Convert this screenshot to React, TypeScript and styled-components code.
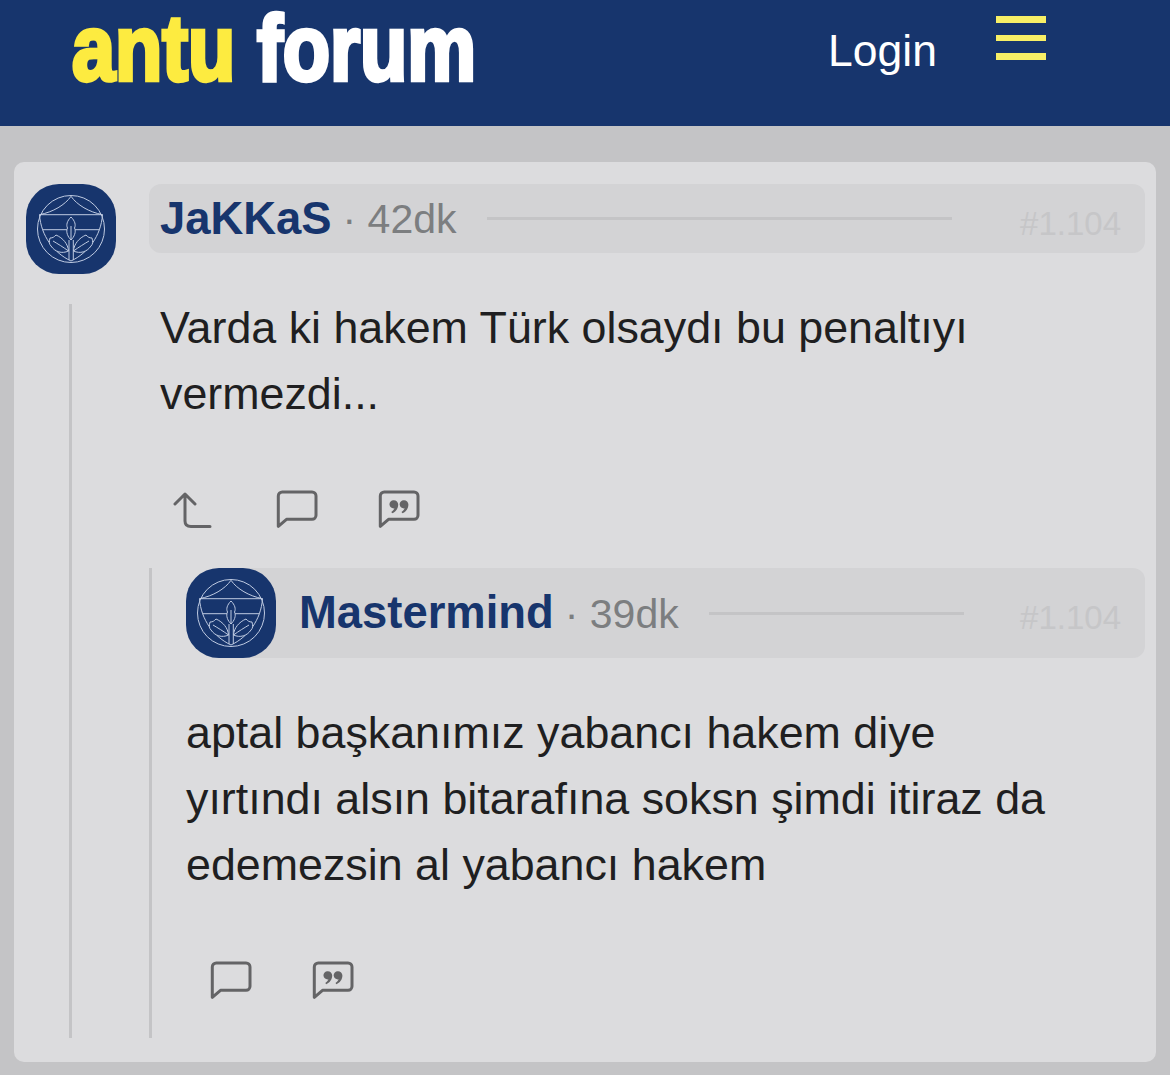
import React from "react";
import styled, { createGlobalStyle } from "styled-components";

const Global = createGlobalStyle`
  html, body { margin: 0; padding: 0; background: #c4c4c6; }
  body { font-family: "Liberation Sans", Arial, sans-serif; }
`;

const Page = styled.div`
  width: 1170px;
  height: 1075px;
  overflow: hidden;
  background: #c4c4c6;
`;

const Header = styled.header`
  height: 126px;
  background: #17356d;
  display: flex;
  align-items: flex-start;
  padding: 0 124px 0 72px;
  box-sizing: border-box;
`;

const Logo = styled.div`
  flex: none;
  height: 100px;
  white-space: nowrap;
  font-family: "Liberation Sans Narrow", "Liberation Sans", sans-serif;
  font-weight: 700;
  font-size: 86px;
  line-height: 100px;
  transform: scale(0.9, 1.08);
  transform-origin: 0 80px;
  -webkit-text-stroke: 4px currentColor;
  color: #fff;
`;

const LogoAccent = styled.span`
  color: #fdeb40;
`;

const Login = styled.a`
  margin-left: auto;
  margin-top: 25px;
  color: #fff;
  font-size: 44.5px;
  line-height: 52px;
`;

const Burger = styled.div`
  flex: none;
  margin-left: 59px;
  margin-top: 16px;
  width: 50px;
  display: flex;
  flex-direction: column;
  gap: 12px;
`;

const BurgerBar = styled.span`
  height: 6.5px;
  background: #f7ef66;
`;

const Card = styled.main`
  margin: 36px 14px 0;
  height: 900px;
  box-sizing: border-box;
  background: #dcdcde;
  border-radius: 10px;
  padding: 22px 11px 24px 12px;
  display: flex;
`;

const AvatarColumn = styled.div`
  width: 123px;
  flex: none;
  display: flex;
  flex-direction: column;
`;

const ThreadLine = styled.div`
  flex: 1;
  width: 3px;
  margin: 30px 0 0 43px;
  background: #c4c4c6;
`;

const Content = styled.div`
  flex: 1;
  min-width: 0;
  display: flex;
  flex-direction: column;
`;

const AvatarBox = styled.div`
  width: 90px;
  height: 90px;
  flex: none;
  border-radius: 33px;
  background: #17356d;
  svg { display: block; }
`;

const PostHead = styled.div<{ $h: number; $pad: number }>`
  height: ${(p) => p.$h}px;
  box-sizing: border-box;
  padding-left: ${(p) => p.$pad}px;
  padding-right: 24px;
  background: #d3d3d5;
  border-radius: ${(p) => (p.$h > 80 ? "33px 12px 12px 33px" : "12px")};
  display: flex;
  align-items: center;
`;

const Name = styled.span<{ $gap?: number }>`
  margin-left: ${(p) => p.$gap ?? 0}px;
  font-weight: 700;
  font-size: 45.4px;
  color: #17356d;
  white-space: nowrap;
`;

const Time = styled.span`
  margin-left: 11px;
  font-size: 41px;
  color: #7c7e80;
  white-space: nowrap;
  margin-top: 2px;
`;

const Rule = styled.span<{ $after: number }>`
  flex: 1;
  height: 3px;
  margin: 0 ${(p) => p.$after}px 0 30px;
  background: #c4c4c6;
`;

const PostNo = styled.span`
  font-size: 33px;
  color: #c6c6c8;
  margin-top: 10px;
  white-space: nowrap;
`;

const Body = styled.p<{ $left: number }>`
  margin: 41px 0 0 ${(p) => p.$left}px;
  font-size: 44.8px;
  line-height: 66px;
  color: #1f1f21;
`;

const Actions = styled.div`
  margin: 64px 0 0 24px;
  display: flex;
  gap: 60px;
  height: 38px;
  svg { display: block; fill: none; stroke: #646466; stroke-width: 3; stroke-linecap: round; stroke-linejoin: round; }
`;

const Nested = styled.section`
  flex: 1;
  margin-top: 40px;
  border-left: 3px solid #c4c4c6;
  padding-left: 34px;
  display: flex;
  flex-direction: column;
`;

const Crest = () => (
  <svg width="90" height="90" viewBox="0 0 90 90" fill="none" stroke="#bfcbe2" strokeWidth="1">
    <circle cx="45" cy="45" r="33.5" />
    <path d="M45 12.300C39 21 27 28 13.500 30.700H76.500C63 28 51 21 45 12.300Z" />
    <path d="M13.500 30.700C15 52 28 69 45 77C62 69 75 52 76.500 30.700" />
    <path d="M16.500 45.700H73.500" />
    <path d="M45 33C41 37 40 41 41.500 44C39.500 48 42 53 45 56C48 53 50.500 48 48.500 44C50 41 49 37 45 33Z" fill="#17356d" />
    <path d="M45 42V56" />
    <path d="M43 56V76M47.300 56V76" />
    <path d="M42.500 67C42 60 37 54 30 51C28 53 27 54 24 54C23 58 23 60 25 62C29 68 36 70 42.500 67Z" fill="#17356d" />
    <path d="M27 57C32 60 37 63 42.500 67" />
    <path d="M47.500 67C48 60 53 54 60 51C62 53 63 54 66 54C67 58 67 60 65 62C61 68 54 70 47.500 67Z" fill="#17356d" />
    <path d="M63 57C58 60 53 63 47.500 67" />
  </svg>
);

const ReplyIcon = () => (
  <svg width="43" height="38" viewBox="0 0 43 38">
    <path d="M2 14L12 4L22 14M12 4V31C12 34.500 14 36.500 18 36.500H37" />
  </svg>
);

const BubblePath = "M2.300 36.300V6a4 4 0 0 1 4-4H36a4 4 0 0 1 4 4V25.300a4 4 0 0 1-4 4H10.500Z";

const CommentIcon = () => (
  <svg width="42" height="38" viewBox="0 0 42 38">
    <path d={BubblePath} />
  </svg>
);

const QuoteIcon = () => (
  <svg width="42" height="38" viewBox="0 0 42 38">
    <path d={BubblePath} />
    <path
      fill="#646466"
      stroke="none"
      d="M15.800 10.200a4.400 4.400 0 0 1 4.400 4.400c0 4-2.600 7.300-6 8.700l-.9-1.400c1.800-1.200 2.900-2.600 3.100-3.600a4.100 4.100 0 1 1-.6-8.100ZM26 10.200a4.400 4.400 0 0 1 4.400 4.400c0 4-2.600 7.300-6 8.700l-.9-1.400c1.800-1.200 2.900-2.600 3.100-3.600a4.100 4.100 0 1 1-.6-8.100Z"
    />
  </svg>
);

export default function App() {
  return (
    <Page>
      <Global />
      <Header>
        <Logo>
          <LogoAccent>antu</LogoAccent> forum
        </Logo>
        <Login>Login</Login>
        <Burger>
          <BurgerBar />
          <BurgerBar />
          <BurgerBar />
        </Burger>
      </Header>
      <Card>
        <AvatarColumn>
          <AvatarBox>
            <Crest />
          </AvatarBox>
          <ThreadLine />
        </AvatarColumn>
        <Content>
          <PostHead $h={69} $pad={11}>
            <Name>JaKKaS</Name>
            <Time>· 42dk</Time>
            <Rule $after={68} />
            <PostNo>#1.104</PostNo>
          </PostHead>
          <Body $left={11}>
            Varda ki hakem Türk olsaydı bu penaltıyı
            <br />
            vermezdi...
          </Body>
          <Actions>
            <ReplyIcon />
            <CommentIcon />
            <QuoteIcon />
          </Actions>
          <Nested>
            <PostHead $h={90} $pad={0}>
              <AvatarBox>
                <Crest />
              </AvatarBox>
              <Name $gap={23}>Mastermind</Name>
              <Time>· 39dk</Time>
              <Rule $after={56} />
              <PostNo>#1.104</PostNo>
            </PostHead>
            <Body $left={0}>
              aptal başkanımız yabancı hakem diye
              <br />
              yırtındı alsın bitarafına soksn şimdi itiraz da
              <br />
              edemezsin al yabancı hakem
            </Body>
            <Actions>
              <CommentIcon />
              <QuoteIcon />
            </Actions>
          </Nested>
        </Content>
      </Card>
    </Page>
  );
}
